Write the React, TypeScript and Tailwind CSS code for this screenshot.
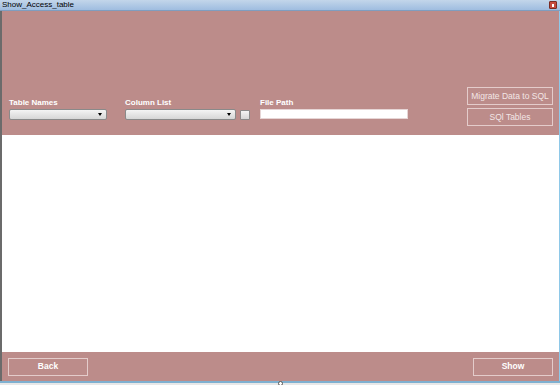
import React from 'react';

const pink = 'bg-[#bc8c8a]';

const Combo: React.FC<{ width: string }> = ({ width }) => (
    <div className={`${width} h-[11px] rounded-[2px] border border-[#8a8a8a] bg-gradient-to-b from-[#f4f4f4] to-[#d6d6d6] flex items-center justify-end pr-[4px]`}>
        <span className="w-0 h-0 border-l-[2.5px] border-r-[2.5px] border-t-[3px] border-l-transparent border-r-transparent border-t-black" />
    </div>
);

const App: React.FC = () => {
    return (
        <div className="w-[560px] h-[385px] flex flex-col bg-[#e8e8e8] font-['Liberation_Sans',Arial,sans-serif] overflow-hidden">
            {/* Title bar */}
            <div className="h-[11px] flex items-center justify-between bg-gradient-to-b from-[#c3d6ea] to-[#9fbde0] border-b border-[#7f9dbf] pl-[2px] pr-[3px]">
                <span className="text-[8px] leading-none text-black">Show_Access_table</span>
                <div className="w-[8px] h-[8px] rounded-[1px] bg-[#c64a3e] border border-[#7a2b24] flex items-center justify-center">
                    <span className="w-[2px] h-[3px] bg-white" />
                </div>
            </div>

            <div className="flex-1 flex flex-col border-l-2 border-l-[#6b6b6b] border-r border-r-[#8ec8e8]">
                {/* Top panel */}
                <div className={`${pink} h-[124px] flex items-end pb-[9px] pl-[7px] pr-[6px]`}>
                    <div className="flex items-end flex-1">
                        <div className="flex flex-col gap-[2px] mb-[6px]">
                            <span className="text-[8px] font-bold text-white leading-none">Table Names</span>
                            <Combo width="w-[98px]" />
                        </div>
                        <div className="flex flex-col gap-[2px] ml-[18px] mb-[6px]">
                            <span className="text-[8px] font-bold text-white leading-none">Column List</span>
                            <div className="flex items-center gap-[4px]">
                                <Combo width="w-[111px]" />
                                <div className="w-[10px] h-[10px] border border-[#8a8a8a] rounded-[1px] bg-gradient-to-b from-[#f4f4f4] to-[#d6d6d6]" />
                            </div>
                        </div>
                        <div className="flex flex-col gap-[2px] ml-[10px] mb-[7px]">
                            <span className="text-[8px] font-bold text-white leading-none">File Path</span>
                            <div className="w-[148px] h-[10px] bg-white border border-[#e6d5d5]" />
                        </div>
                    </div>
                    <div className="flex flex-col gap-[3px]">
                        <button className="w-[86px] h-[18px] border border-[#e4cccb] text-[8.5px] text-[#f3e6e6] leading-none">Migrate Data to SQL</button>
                        <button className="w-[86px] h-[18px] border border-[#e4cccb] text-[8.5px] text-[#f3e6e6] leading-none">SQl Tables</button>
                    </div>
                </div>

                {/* Grid area */}
                <div className="flex-1 bg-white" />

                {/* Bottom panel */}
                <div className={`${pink} h-[29px] flex items-center justify-between pl-[6px] pr-[6px]`}>
                    <button className="w-[80px] h-[18px] border border-[#e4cccb] text-[8.5px] font-bold text-white leading-none">Back</button>
                    <button className="w-[80px] h-[18px] border border-[#e4cccb] text-[8.5px] font-bold text-white leading-none">Show</button>
                </div>
            </div>

            {/* Bottom frame */}
            <div className="relative h-[4px] bg-[#e8e8e8] border-t-2 border-t-[#7fb0d0]">
                <span className="absolute left-[278px] -top-[2px] w-[5px] h-[5px] rounded-full border border-[#555] bg-white" />
            </div>
        </div>
    );
};

export default App;
